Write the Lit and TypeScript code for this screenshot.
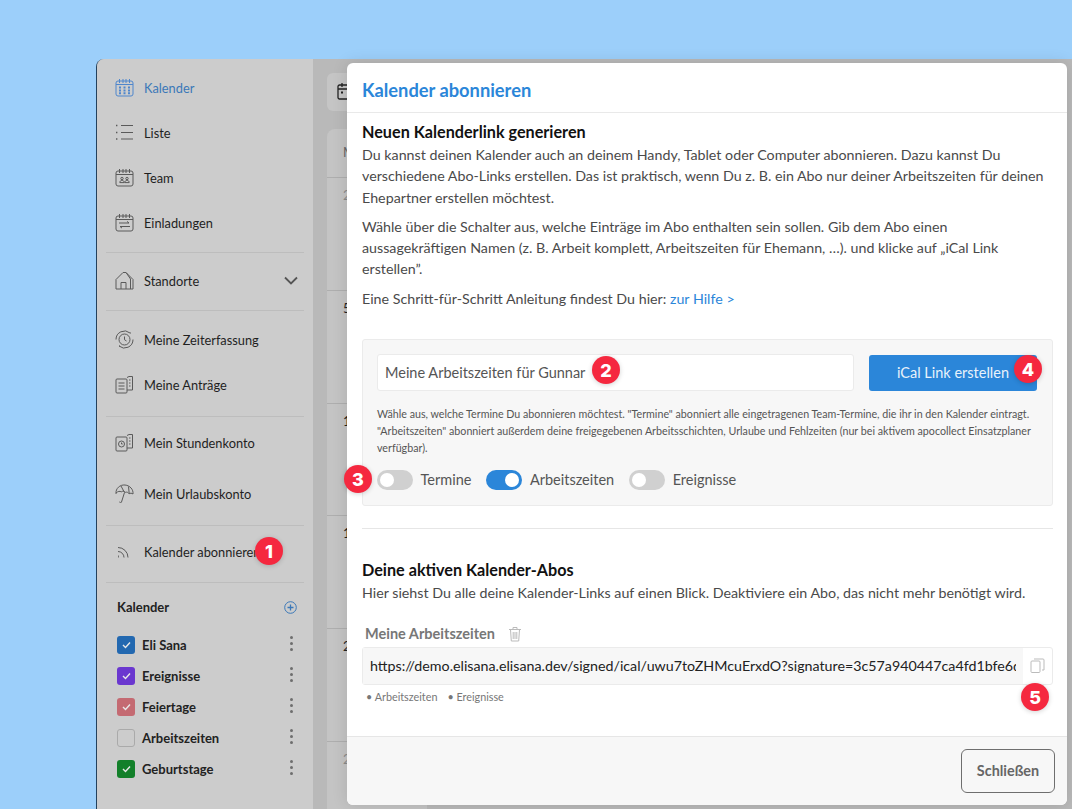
import { LitElement, html, css, svg } from 'lit';
import { customElement } from 'lit/decorators.js';

const calTop = svg`<rect x="1" y="3" width="17" height="15" rx="2"/><path d="M1 6.5h17M4.5 1v4M8 1v4M11 1v4M14.5 1v4"/>`;

const icons: Record<string, unknown> = {
    kalender: svg`${calTop}<path stroke-width="2" d="M4 9.5h2M8.5 9.5h2M13 9.5h2M4 12.5h2M8.5 12.5h2M13 12.5h2M4 15.2h2M8.5 15.2h2M13 15.2h2"/>`,
    liste: svg`<path d="M6 2.5h12M6 9.5h12M6 16h12"/><path stroke-width="1.4" d="M1 2.5h1.4M1 9.5h1.4M1 16h1.4"/>`,
    team: svg`${calTop}<circle cx="7" cy="10.5" r="1.2"/><circle cx="12" cy="10.5" r="1.2"/><path d="M4.8 14.6c0-3 4.4-3 4.4 0zM9.8 14.6c0-3 4.4-3 4.4 0z"/>`,
    einladungen: svg`${calTop}<path d="M4 10h10l-2-1.6M15 13.5H5l2 1.6"/>`,
    standorte: svg`<path d="M1 18V8.500L8 1.500l3 0 7 7V18zM11 1.500L15.500 8v10"/><path d="M6 18v-6.500h5V18"/>`,
    zeit: svg`<circle cx="9.500" cy="9.500" r="5.500"/><path d="M9.500 6.500v3.200l2 1.300M1 9.500a8.500 8.500 0 0 1 14-6.500M18 9.500a8.500 8.500 0 0 1-14 6.500"/><path stroke-width="2" d="M15 3h.5M4 16h.5"/>`,
    antraege: svg`<rect x="1" y="4" width="11" height="14" rx="1"/><path d="M12 2.500l2-1h3.500V15H12M3.500 8h6M3.500 11h6M3.500 14h6M14 5h1.500M14 8h1.500M14 11h1.500"/>`,
    stunden: svg`<rect x="1" y="4" width="11" height="14" rx="1"/><path d="M12 2.500l2-1h3.500V15H12M14 5h1.500M14 8h1.500M14 11h1.500"/><circle cx="6.500" cy="11" r="3"/><path d="M6.500 9.500V11h1.200"/>`,
    urlaub: svg`<path d="M1 9.500C.5 4.500 5 .5 10 1s8.500 4.500 8 9c-1.300-1-2.700-1-3.900-.2-.8-1.500-2.400-2-3.800-1.500-1.100-1.300-2.700-1.400-4-.5-1.500-.8-3.300-.6-5.300 1.200z"/><path d="M9.500 8.500L6.500 18c-.3 1.200-2 1-1.800-.3M6 2L9.500 8.500M13.500 2.500L14.200 9.500"/>`,
    rss: svg`<path d="M3 9.500a6 6 0 0 1 6 6M3 5.500a10 10 0 0 1 10 10"/><path stroke-width="2" d="M3 14.500h.8"/>`,
};

const nav = (key: string, label: string, cls = '') => html`
    <div class="item ${cls}">
        <svg class="icon" viewBox="0 0 19 19">${icons[key]}</svg>
        <span>${label}</span>
    </div>`;

const calendars = [
    { name: 'Eli Sana', color: '#2268b0' },
    { name: 'Ereignisse', color: '#6a37cf' },
    { name: 'Feiertage', color: '#c46a72' },
    { name: 'Arbeitszeiten', color: '' },
    { name: 'Geburtstage', color: '#13802a' },
];

const rows = [
    { n: '2', dark: false, h: 113 },
    { n: '5', dark: true, h: 113 },
    { n: '1', dark: true, h: 112 },
    { n: '1', dark: true, h: 113 },
    { n: '2', dark: true, h: 113 },
    { n: '2', dark: false, h: 68 },
];

const url = 'https://demo.elisana.elisana.dev/signed/ical/uwu7toZHMcuErxdO?signature=3c57a940447ca4fd1bfe6d2e81c07b';

@customElement('app-root')
export class AppRoot extends LitElement {
    static styles = css`
        :host {
            display: block;
            position: relative;
            height: 809px;
            overflow: hidden;
            background: #9ccffa;
            padding: 59px 0 0 96px;
            box-sizing: border-box;
            font-family: Lato, "Open Sans", sans-serif;
            color: #4a4a4a;
        }
        .window {
            display: flex;
            height: 790px;
            border-radius: 8px 0 0 0;
            border-left: 1.500px solid #23415c;
            background: #b9b9b9;
            overflow: hidden;
        }
        .sidebar {
            width: 216px;
            flex: none;
            background: #cccccc;
            padding: 6px 9px 0 9px;
            box-sizing: border-box;
        }
        .group { border-bottom: 1px solid #bdbdbd; }
        .g1 { padding-bottom: 7px; }
        .g2 { padding: 5px 0 7px; }
        .g3 { padding: 6px 0 9px; }
        .g4 { padding: 3px 0 9px; }
        .g5 { padding: 3px 0 8px; }
        .spacer { height: 6px; }
        .item {
            display: flex;
            align-items: center;
            height: 45px;
            padding-left: 9px;
            gap: 10px;
            font-size: 12.800px;
            color: #1f1f1f;
        }
        .item.active { color: #3b78b8; }
        .item.active .icon { stroke: #4f86cc; }
        .icon {
            width: 19px;
            height: 19px;
            flex: none;
            fill: none;
            stroke: #5a5a5a;
            stroke-width: 1;
        }
        .chev { width: 14px; height: 9px; margin-left: auto; margin-right: 6px; fill: none; stroke: #555; stroke-width: 1.800; }
        .cal-head {
            display: flex;
            justify-content: space-between;
            align-items: center;
            margin: 16px 7px 14px 11px;
            font-size: 13px;
            font-weight: 700;
            color: #222;
        }
        .plus { width: 13px; height: 13px; fill: none; stroke: #3b78b8; stroke-width: 1; }
        .cal {
            display: flex;
            align-items: center;
            height: 31px;
            margin-left: 11px;
            gap: 7px;
            font-size: 13px;
            font-weight: 700;
            color: #222;
        }
        .check {
            width: 18px;
            height: 18px;
            box-sizing: border-box;
            border-radius: 3px;
            display: flex;
            align-items: center;
            justify-content: center;
            flex: none;
        }
        .check.off { border: 1px solid #aaa; }
        .check svg { width: 9px; height: 8px; fill: none; stroke: #e8e8e8; stroke-width: 1.400; }
        .dots { margin-left: auto; margin-right: 11px; display: flex; flex-direction: column; gap: 3px; margin-top: -3px; }
        .dots i { width: 3px; height: 3px; border-radius: 50%; background: #6e6e6e; }

        .main { flex: 1; padding: 14px 0 0 14px; }
        .toolbar {
            height: 38px;
            width: 100px;
            background: #c5c5c5;
            border-radius: 6px;
            padding: 9px 0 0 10px;
            box-sizing: border-box;
            margin-bottom: 18px;
        }
        .toolbar svg { width: 18px; height: 18px; fill: none; stroke: #222; stroke-width: 1.300; display: block; }
        .table { background: #c4c4c4; border-radius: 8px 0 0 0; width: 100px; }
        .thead { height: 48px; padding: 15px 0 0 16px; box-sizing: border-box; font-size: 13px; color: #666; }
        .row {
            border-top: 1px solid #aeaeae;
            box-sizing: border-box;
            padding: 9px 0 0 16px;
            font-size: 13px;
            color: #8a8a8a;
        }
        .row.dark { color: #222; }

        .modal {
            position: absolute;
            left: 347px;
            top: 63px;
            width: 720px;
            height: 742px;
            background: #fff;
            border-radius: 6px;
            box-shadow: 0 0 16px rgba(0, 0, 0, 0.12);
            display: flex;
            flex-direction: column;
            overflow: hidden;
        }
        .m-head {
            height: 50px;
            flex: none;
            box-sizing: border-box;
            display: flex;
            align-items: center;
            padding: 4px 15px 0;
            font-size: 18.300px;
            font-weight: 700;
            color: #2b86d9;
            border-bottom: 1px solid #e9e9e9;
        }
        .m-body { flex: 1; padding: 8px 14px 0 15px; font-size: 14.250px; line-height: 21.300px; }
        h3 { margin: 0 0 1px; font-size: 16.200px; font-weight: 700; color: #111; line-height: 22px; }
        p { margin: 0 0 8px; }
        a { color: #2b86d9; text-decoration: none; }
        .box {
            margin-top: 30px;
            height: 167px;
            box-sizing: border-box;
            background: #f7f7f7;
            border: 1px solid #ebebeb;
            border-radius: 3px;
            padding: 14px 15px 0 14px;
        }
        .form { display: flex; gap: 15px; align-items: center; font-size: 14.500px; }
        .input {
            flex: 1;
            height: 37px;
            box-sizing: border-box;
            background: #fff;
            border: 1px solid #ebebeb;
            border-radius: 3px;
            padding: 0 7px;
            line-height: 35px;
            color: #555;
        }
        .btn {
            width: 168px;
            height: 36px;
            background: #2b86d9;
            border-radius: 3px;
            color: #e8f2fb;
            display: flex;
            align-items: center;
            justify-content: center;
        }
        .hint { margin: 14px 0 0; font-size: 10.700px; line-height: 17px; color: #555; }
        .toggles { display: flex; align-items: center; margin-top: 13px; color: #555; font-size: 14.500px; }
        .toggle {
            width: 36px;
            height: 20px;
            border-radius: 10px;
            background: #d0d0d0;
            position: relative;
            margin-right: 7.500px;
            flex: none;
        }
        .toggle::after {
            content: '';
            position: absolute;
            left: 3px;
            top: 3px;
            width: 14px;
            height: 14px;
            border-radius: 50%;
            background: #fff;
        }
        .toggle.on { background: #2b86d9; }
        .toggle.on::after { left: 19px; }
        .toggles span { margin-right: 15px; }
        hr { border: 0; border-top: 1px solid #e6e6e6; margin: 22px 0 30px; }
        .sub {
            display: flex;
            align-items: center;
            gap: 13px;
            margin: 20px 0 2px 3px;
            font-size: 14.500px;
            font-weight: 700;
            color: #777;
        }
        .sub svg { width: 14px; height: 16px; fill: none; stroke: #bbb; stroke-width: 1; }
        .url {
            display: flex;
            height: 38px;
            box-sizing: border-box;
            border: 1px solid #ebebeb;
            border-radius: 3px;
        }
        .url-text {
            flex: 1;
            min-width: 0;
            background: #f7f7f7;
            padding: 0 7px;
            line-height: 36px;
            color: #222;
        }
        .url-clip { white-space: nowrap; overflow: hidden; }
        .url-copy { width: 29px; display: flex; align-items: center; justify-content: center; }
        .url svg { width: 15px; height: 15px; fill: none; stroke: #bbb; stroke-width: 1; }
        .tags { display: flex; gap: 10px; margin: 2px 0 0 4px; font-size: 10.800px; line-height: 20px; color: #777; }
        .m-foot {
            height: 69px;
            flex: none;
            box-sizing: border-box;
            background: #f7f7f7;
            border-top: 1px solid #e6e6e6;
            display: flex;
            justify-content: flex-end;
            align-items: center;
            padding: 0 12px 1px;
        }
        .close {
            width: 94px;
            height: 44px;
            box-sizing: border-box;
            border: 1px solid #6e6e6e;
            border-radius: 6px;
            display: flex;
            align-items: center;
            justify-content: center;
            font-size: 14.400px;
            font-weight: 700;
            color: #666;
        }
        .badge {
            position: absolute;
            width: 28px;
            height: 28px;
            margin: -14px 0 0 -14px;
            border-radius: 50%;
            background: #f5283f;
            color: #fff;
            font-size: 18px;
            font-weight: 800;
            font-family: Inter, sans-serif;
            display: flex;
            align-items: center;
            justify-content: center;
            box-shadow: 0 1px 5px rgba(0, 0, 0, 0.18);
        }
    `;

    render() {
        return html`
        <div class="window">
            <aside class="sidebar">
                <div class="group g1">
                    ${nav('kalender', 'Kalender', 'active')}
                    ${nav('liste', 'Liste')}
                    ${nav('team', 'Team')}
                    ${nav('einladungen', 'Einladungen')}
                </div>
                <div class="group g2">
                    <div class="item">
                        <svg class="icon" viewBox="0 0 19 19">${icons.standorte}</svg>
                        <span>Standorte</span>
                        <svg class="chev" viewBox="0 0 14 9"><path d="M1 1.500l6 6 6-6"/></svg>
                    </div>
                </div>
                <div class="group g3">
                    ${nav('zeit', 'Meine Zeiterfassung')}
                    ${nav('antraege', 'Meine Anträge')}
                </div>
                <div class="group g4">
                    ${nav('stunden', 'Mein Stundenkonto')}
                    <div class="spacer"></div>
                    ${nav('urlaub', 'Mein Urlaubskonto')}
                </div>
                <div class="group g5">
                    ${nav('rss', 'Kalender abonnieren')}
                </div>
                <div class="cal-head">
                    <span>Kalender</span>
                    <svg class="plus" viewBox="0 0 13 13"><circle cx="6.500" cy="6.500" r="5.800"/><path stroke-width="1.300" d="M6.500 3.500v6M3.500 6.500h6"/></svg>
                </div>
                ${calendars.map(c => html`
                <div class="cal">
                    <div class="check ${c.color ? '' : 'off'}" style=${c.color ? `background:${c.color}` : ''}>
                        ${c.color ? html`<svg viewBox="0 0 9 8"><path d="M1 4l2.500 2.500L8 1.500"/></svg>` : ''}
                    </div>
                    <span>${c.name}</span>
                    <div class="dots"><i></i><i></i><i></i></div>
                </div>`)}
            </aside>
            <div class="main">
                <div class="toolbar">
                    <svg viewBox="0 0 18 18"><rect x="1" y="3" width="16" height="14" rx="1.500"/><path d="M1 7h16M5 1v4M13 1v4"/><path stroke-width="2" d="M4 10.500h2"/></svg>
                </div>
                <div class="table">
                    <div class="thead">Mo</div>
                    ${rows.map(r => html`<div class="row ${r.dark ? 'dark' : ''}" style="height:${r.h}px">${r.n}</div>`)}
                </div>
            </div>
        </div>

        <div class="modal">
            <div class="m-head">Kalender abonnieren</div>
            <div class="m-body">
                <h3>Neuen Kalenderlink generieren</h3>
                <p>Du kannst deinen Kalender auch an deinem Handy, Tablet oder Computer abonnieren. Dazu kannst Du verschiedene Abo-Links erstellen. Das ist praktisch, wenn Du z. B. ein Abo nur deiner Arbeitszeiten für deinen Ehepartner erstellen möchtest.</p>
                <p>Wähle über die Schalter aus, welche Einträge im Abo enthalten sein sollen. Gib dem Abo einen aussagekräftigen Namen (z. B. Arbeit komplett, Arbeitszeiten für Ehemann, …). und klicke auf „iCal Link erstellen”.</p>
                <p>Eine Schritt-für-Schritt Anleitung findest Du hier: <a>zur Hilfe &gt;</a></p>
                <div class="box">
                    <div class="form">
                        <div class="input">Meine Arbeitszeiten für Gunnar</div>
                        <div class="btn">iCal Link erstellen</div>
                    </div>
                    <p class="hint">Wähle aus, welche Termine Du abonnieren möchtest. "Termine" abonniert alle eingetragenen Team-Termine, die ihr in den Kalender eintragt. "Arbeitszeiten" abonniert außerdem deine freigegebenen Arbeitsschichten, Urlaube und Fehlzeiten (nur bei aktivem apocollect Einsatzplaner verfügbar).</p>
                    <div class="toggles">
                        <div class="toggle"></div><span>Termine</span>
                        <div class="toggle on"></div><span>Arbeitszeiten</span>
                        <div class="toggle"></div><span>Ereignisse</span>
                    </div>
                </div>
                <hr />
                <h3>Deine aktiven Kalender-Abos</h3>
                <p>Hier siehst Du alle deine Kalender-Links auf einen Blick. Deaktiviere ein Abo, das nicht mehr benötigt wird.</p>
                <div class="sub">
                    <span>Meine Arbeitszeiten</span>
                    <svg viewBox="0 0 14 16"><path d="M1 3.500h12M5 3.500V1.500h4v2M2.500 3.500l.8 11.500h7.400l.8-11.500M5.200 6v7M7 6v7M8.800 6v7"/></svg>
                </div>
                <div class="url">
                    <div class="url-text"><div class="url-clip">${url}</div></div>
                    <div class="url-copy"><svg viewBox="0 0 15 15"><rect x="1" y="3" width="9" height="11.500" rx="1"/><path d="M4 1h9a1 1 0 0 1 1 1v10h-2"/></svg></div>
                </div>
                <div class="tags"><span>• Arbeitszeiten</span><span>• Ereignisse</span></div>
            </div>
            <div class="m-foot"><div class="close">Schließen</div></div>
        </div>

        <div class="badge" style="left:269px;top:551px">1</div>
        <div class="badge" style="left:606px;top:370px">2</div>
        <div class="badge" style="left:358px;top:479px">3</div>
        <div class="badge" style="left:1028px;top:369px">4</div>
        <div class="badge" style="left:1035px;top:697px">5</div>
        `;
    }
}

declare global {
    interface HTMLElementTagNameMap {
        'app-root': AppRoot;
    }
}
